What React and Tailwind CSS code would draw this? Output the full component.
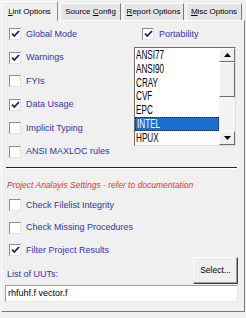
import React from 'react';

const leftChecks = [
  { label: 'Global Mode', checked: true },
  { label: 'Warnings', checked: true },
  { label: 'FYIs', checked: false },
  { label: 'Data Usage', checked: true },
  { label: 'Implicit Typing', checked: false },
  { label: 'ANSI MAXLOC rules', checked: false },
];

const projectChecks = [
  { label: 'Check Filelist Integrity', checked: false },
  { label: 'Check Missing Procedures', checked: false },
  { label: 'Filter Project Results', checked: true },
];

const platforms = ['ANSI77', 'ANSI90', 'CRAY', 'CVF', 'EPC', 'INTEL', 'HPUX'];

function CheckBox({ checked }) {
  return (
    <div className="w-[12px] h-[12px] shrink-0 bg-white border border-t-[#8c8c8c] border-l-[#8c8c8c] border-r-[#e2e2e2] border-b-[#e2e2e2] flex items-center justify-center">
      {checked && (
        <svg width="9" height="8" viewBox="0 0 9 8">
          <path d="M1 3.5 L3.3 6 L8 1" fill="none" stroke="#1b1b70" strokeWidth="1.8" />
        </svg>
      )}
    </div>
  );
}

function CheckRow({ label, checked }) {
  return (
    <div className="flex items-center h-[12px] gap-[5px]">
      <CheckBox checked={checked} />
      <span className="text-[9px] leading-none text-[#3535a6]">{label}</span>
    </div>
  );
}

function Tab({ first, rest, width, selected }) {
  if (selected) {
    return (
      <div className={`${width} h-[20px] -mb-px relative z-10 bg-[#f0f0f0] border-l border-t border-white border-r border-r-[#8a8a8a] flex items-center justify-center text-[8px] text-black`}>
        <span>
          <span className="underline">{first}</span>
          {rest}
        </span>
      </div>
    );
  }
  return (
    <div className={`${width} h-[17px] bg-[#e6e6e6] border-l border-t border-[#fdfdfd] border-r border-r-[#7a7a7a] flex items-center justify-center text-[8px] text-black`}>
      <span>{first}</span>
    </div>
  );
}

function Arrow({ up }) {
  return (
    <div className="h-[14px] bg-[#f0f0f0] border border-t-white border-l-white border-r-[#6e6e6e] border-b-[#6e6e6e] flex items-center justify-center">
      <svg width="7" height="4" viewBox="0 0 7 4">
        <path d={up ? 'M0 4 L3.5 0 L7 4 Z' : 'M0 0 L3.5 4 L7 0 Z'} fill="#000" />
      </svg>
    </div>
  );
}

export default function App() {
  return (
    <div className="w-[246px] h-[318px] bg-[#f0f0f0] overflow-hidden" style={{ fontFamily: '"Liberation Sans", Arial, sans-serif' }}>
      <div className="flex items-end gap-[2px] pl-[1px] pt-[1px]">
        <div className="w-[57px] h-[20px] -mb-px relative z-10 bg-[#f0f0f0] border-l border-t border-white border-r border-r-[#8a8a8a] flex items-center justify-center text-[8px] text-black">
          <span><span className="underline">L</span>int Options</span>
        </div>
        <div className="w-[61px] h-[17px] bg-[#e6e6e6] border-l border-t border-[#fdfdfd] border-r border-r-[#7a7a7a] flex items-center justify-center text-[8px] text-black">
          <span>Source <span className="underline">C</span>onfig</span>
        </div>
        <div className="w-[61px] h-[17px] bg-[#e6e6e6] border-l border-t border-[#fdfdfd] border-r border-r-[#7a7a7a] flex items-center justify-center text-[8px] text-black">
          <span><span className="underline">R</span>eport Options</span>
        </div>
        <div className="w-[56px] h-[17px] bg-[#e6e6e6] border-l border-t border-[#fdfdfd] border-r border-r-[#7a7a7a] flex items-center justify-center text-[8px] text-black">
          <span><span className="underline">M</span>isc Options</span>
        </div>
      </div>

      <div className="ml-[1px] w-[244px] h-[292px] border border-t-white border-l-white border-r-[#7a7a7a] border-b-[#7a7a7a] bg-[#f0f0f0]">
        <div className="flex pt-[7px]">
          <div className="w-[132px] pl-[7px] flex flex-col gap-[11.5px]">
            {leftChecks.map((c) => (
              <CheckRow key={c.label} label={c.label} checked={c.checked} />
            ))}
          </div>
          <div className="flex flex-col">
            <div className="pl-[8px]">
              <CheckRow label="Portability" checked={true} />
            </div>
            <div className="mt-[7px] w-[102px] h-[99px] bg-white border border-t-[#6e6e6e] border-l-[#6e6e6e] border-r-[#dcdcdc] border-b-[#dcdcdc] flex">
              <div className="flex-1 flex flex-col">
                {platforms.map((p) => (
                  <div
                    key={p}
                    className={`h-[14px] pl-[1px] flex items-center text-[12px] leading-none ${p === 'INTEL' ? 'bg-[#1b6ed0] text-white border border-dotted border-[#0a2a55]' : 'text-black'}`}
                  >
                    <span className="inline-block origin-left scale-x-[0.68]">{p}</span>
                  </div>
                ))}
              </div>
              <div className="w-[16px] flex flex-col bg-[#f4f4f4]">
                <Arrow up />
                <div className="h-[35px] bg-[#f0f0f0] border border-t-white border-l-white border-r-[#6e6e6e] border-b-[#6e6e6e]" />
                <div className="flex-1" />
                <Arrow />
              </div>
            </div>
          </div>
        </div>

        <div className="mx-[4px] mt-[9px] border-t border-t-[#222] border-b border-b-white w-[231px]" />

        <div className="mt-[12px] pl-[5px] text-[8.5px] italic leading-none text-[#d03b3b]">
          Project Analayis Settings - refer to documentation
        </div>

        <div className="mt-[10px] pl-[7px] flex flex-col gap-[10.5px]">
          {projectChecks.map((c) => (
            <CheckRow key={c.label} label={c.label} checked={c.checked} />
          ))}
        </div>

        <div className="flex items-end justify-between mt-[1px] pl-[5px] pr-[6px]">
          <span className="text-[9px] leading-none text-[#3535a6] mb-[5px]">List of UUTs:</span>
          <div className="w-[45px] h-[27px] bg-[#f0f0f0] border border-t-white border-l-white border-r-[#404040] border-b-[#404040] shadow-[inset_-1px_-1px_0_#a0a0a0] flex items-center justify-center text-[8.5px] text-black">
            Select...
          </div>
        </div>

        <div className="mt-[1px] ml-[3px] w-[233px] h-[17px] bg-white border border-t-[#a0a0a0] border-l-[#a0a0a0] border-r-[#e8e8e8] border-b-[#e8e8e8] flex items-center pl-[2px] text-[9px] text-black">
          rhfuhf.f vector.f
        </div>
      </div>
    </div>
  );
}
